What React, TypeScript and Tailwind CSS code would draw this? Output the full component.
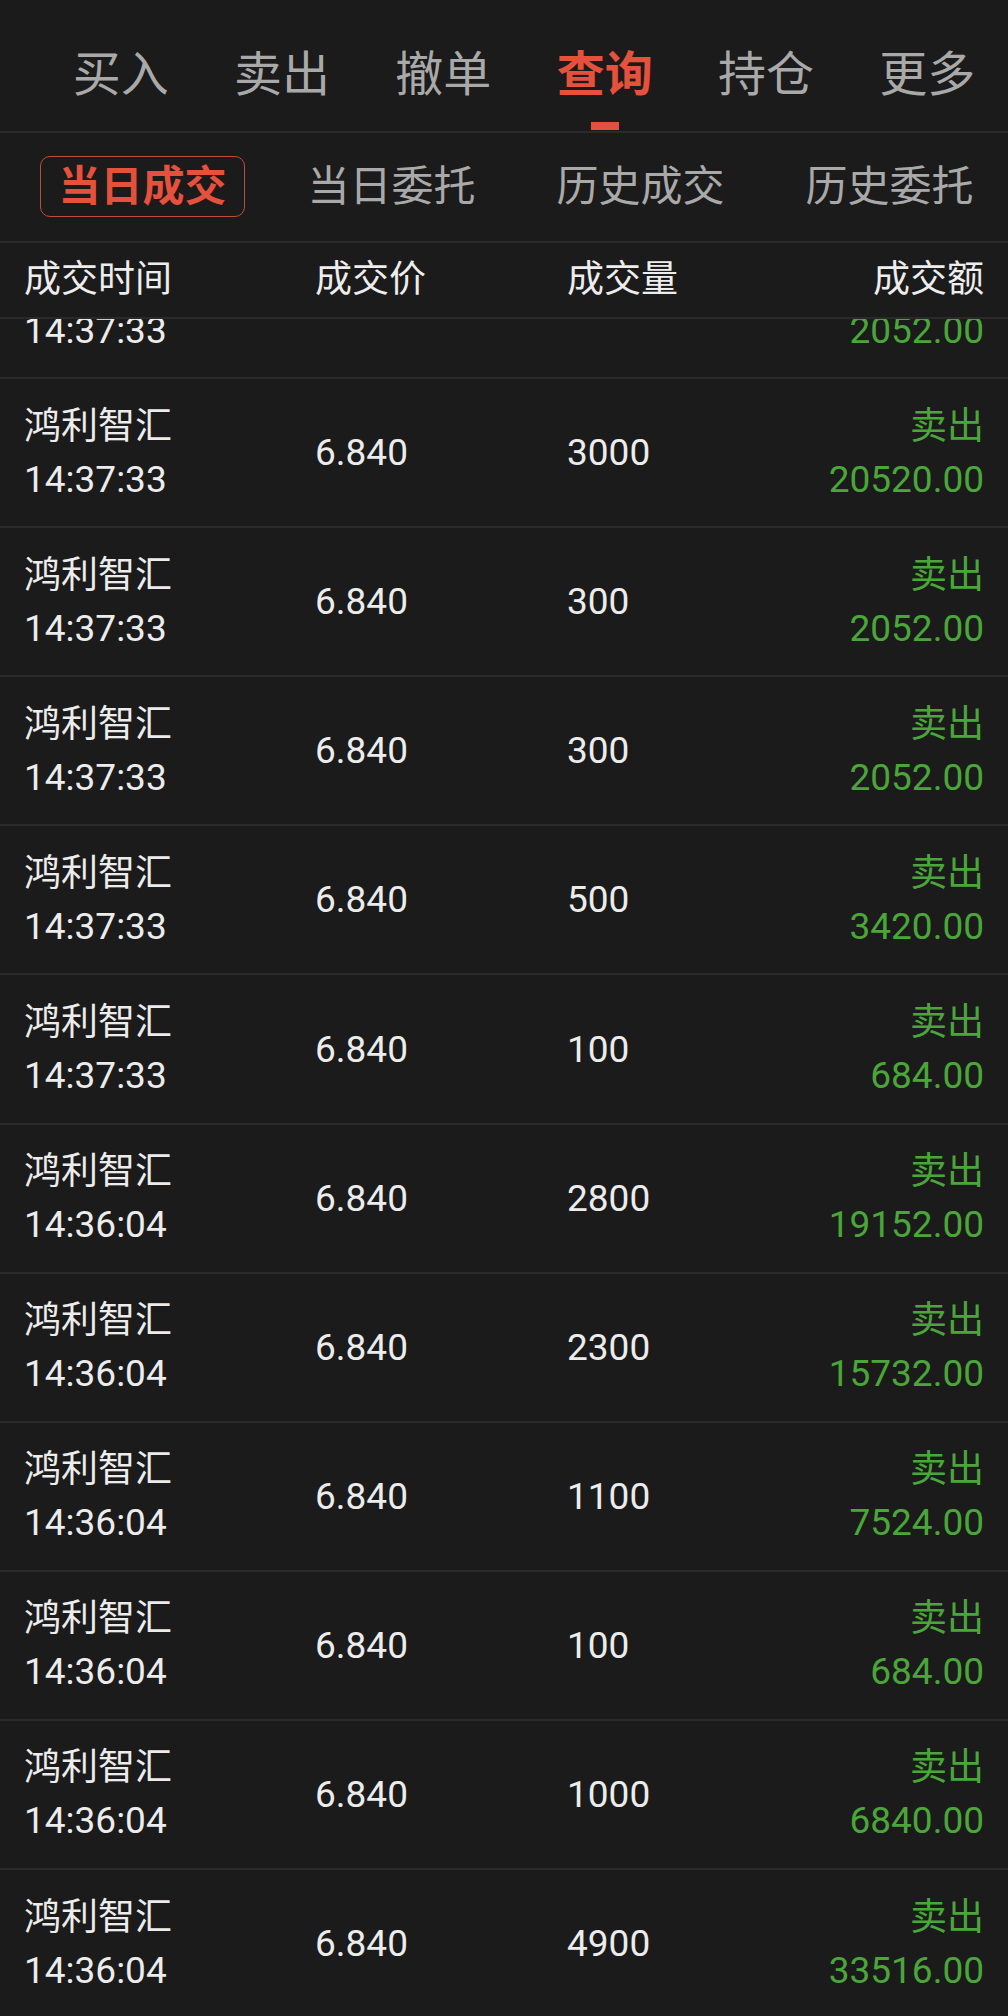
import React from "react";

const FONT = "'Roboto', 'Noto Sans CJK SC', sans-serif";

type Row = { time: string; qty: string; amount: string; partial?: boolean };

const rows: Row[] = [
  { time: "14:37:33", qty: "", amount: "2052.00", partial: true },
  { time: "14:37:33", qty: "3000", amount: "20520.00" },
  { time: "14:37:33", qty: "300", amount: "2052.00" },
  { time: "14:37:33", qty: "300", amount: "2052.00" },
  { time: "14:37:33", qty: "500", amount: "3420.00" },
  { time: "14:37:33", qty: "100", amount: "684.00" },
  { time: "14:36:04", qty: "2800", amount: "19152.00" },
  { time: "14:36:04", qty: "2300", amount: "15732.00" },
  { time: "14:36:04", qty: "1100", amount: "7524.00" },
  { time: "14:36:04", qty: "100", amount: "684.00" },
  { time: "14:36:04", qty: "1000", amount: "6840.00" },
  { time: "14:36:04", qty: "4900", amount: "33516.00" },
];

const topTabs = ["买入", "卖出", "撤单", "查询", "持仓", "更多"];
const subTabs = ["当日成交", "当日委托", "历史成交", "历史委托"];

export default function App() {
  return (
    <div
      className="w-[1008px] h-[2016px] bg-[#1b1b1b] overflow-hidden flex flex-col"
      style={{ fontFamily: FONT }}
    >
      {/* Top tabs */}
      <div className="h-[133px] shrink-0 border-b-2 border-[#2a2a2a] grid grid-cols-6 pl-[40px]">
        {topTabs.map((t, i) => {
          const active = i === 3;
          return (
            <div key={t} className="flex flex-col items-center pt-[47px]">
              <div
                className={
                  "text-[48px] leading-[56px] " +
                  (active ? "text-[#e5513c] font-bold" : "text-[#a9a9a9]")
                }
              >
                {t}
              </div>
              <div
                className={
                  "mt-[19px] h-[8px] w-[28px] " + (active ? "bg-[#e5513c]" : "bg-transparent")
                }
              />
            </div>
          );
        })}
      </div>

      {/* Sub tabs */}
      <div className="h-[110px] shrink-0 border-b-2 border-[#2a2a2a] flex items-center pl-[40px] gap-[44px] pb-[1px]">
        {subTabs.map((t, i) => {
          const active = i === 0;
          return (
            <div
              key={t}
              className={
                "w-[205px] h-[61px] flex items-center justify-center rounded-[10px] text-[42px] leading-none " +
                (active
                  ? "border-[1.5px] border-[#c24a3a] text-[#e5513c] font-bold"
                  : "text-[#a9a9a9]")
              }
            >
              {t}
            </div>
          );
        })}
      </div>

      {/* Header */}
      <div className="h-[76px] shrink-0 border-b-2 border-[#2a2a2a] flex items-center px-[24px] text-[37px] text-[#ededed]">
        <div className="w-[291px]">成交时间</div>
        <div className="w-[252px]">成交价</div>
        <div className="flex-1">成交量</div>
        <div className="text-right">成交额</div>
      </div>

      {/* List (scrolled: first row partly under the header) */}
      <div className="flex-1 overflow-hidden">
        <div className="-mt-[89px]">
          {rows.map((r, i) => (
            <div
              key={i}
              className="h-[149.1px] border-b-2 border-[#2a2a2a] flex items-center px-[24px] text-[37px] leading-[53px]"
            >
              <div className="w-[291px] text-[#ececec]">
                <div>{r.partial ? "\u00a0" : "鸿利智汇"}</div>
                <div>{r.time}</div>
              </div>
              <div className="w-[252px] text-[#ececec]">{r.partial ? "" : "6.840"}</div>
              <div className="flex-1 text-[#ececec]">{r.qty}</div>
              <div className="text-right text-[#4ba63a]">
                <div>{r.partial ? "\u00a0" : "卖出"}</div>
                <div>{r.amount}</div>
              </div>
            </div>
          ))}
        </div>
      </div>
    </div>
  );
}
